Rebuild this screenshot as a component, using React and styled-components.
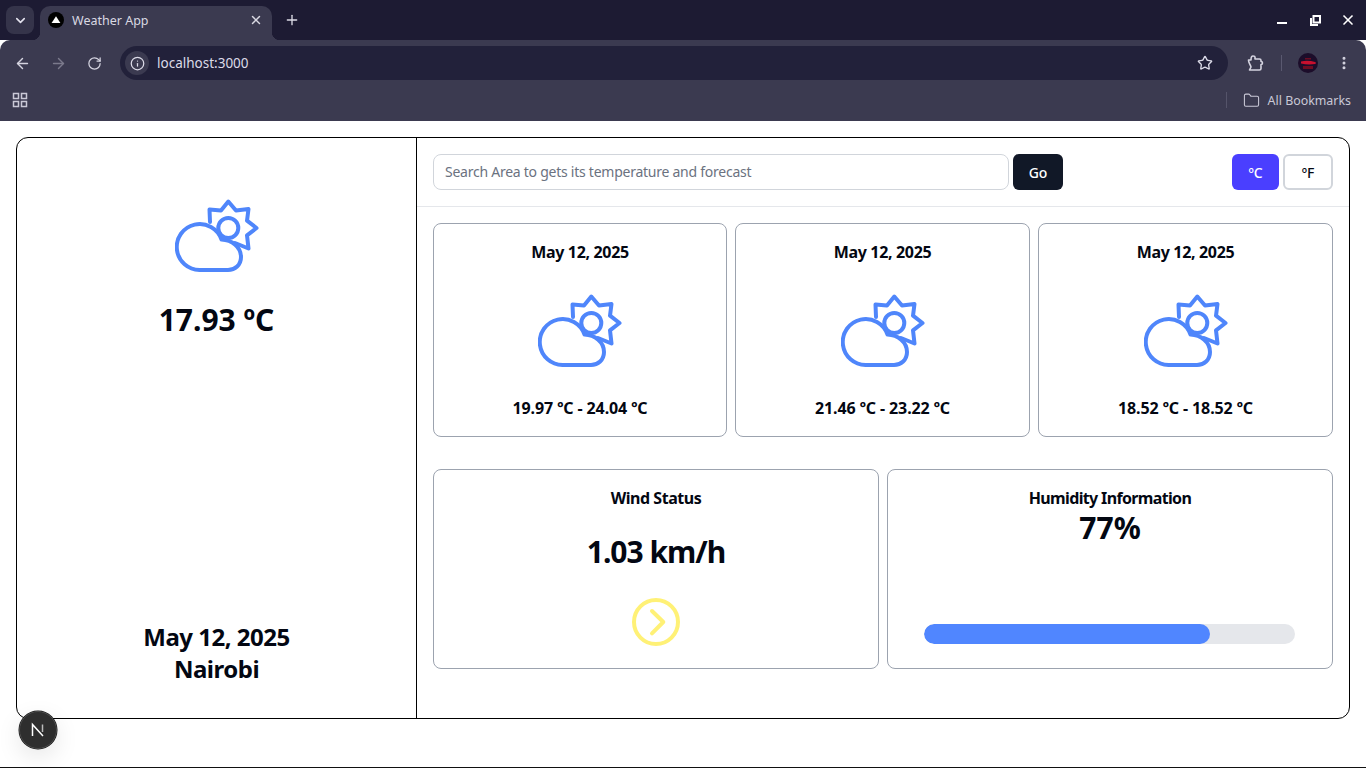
import React from "react";
import styled, { createGlobalStyle } from "styled-components";
import { ArrowLeft, ArrowRight, RotateCw, Info, Star, EllipsisVertical, ChevronDown, X, Plus, Folder } from "lucide-react";

const FONT = `"Noto Sans", "Open Sans", sans-serif`;

const Global = createGlobalStyle`
  * { box-sizing: border-box; }
  html, body { margin: 0; padding: 0; background: #fff; height: 768px; overflow: hidden; }
  body { font-family: ${FONT}; color: #030712; }
`;

const Frame = styled.div`
  width: 1366px;
  height: 768px;
  display: flex;
  flex-direction: column;
  position: relative;
  border-bottom: 1px solid #111;
`;

/* browser chrome */
const TabStrip = styled.div`
  height: 40px;
  background: #1d1b33;
  display: flex;
  align-items: flex-end;
  padding-left: 6px;
`;
const TabSwitch = styled.div`
  width: 28px;
  height: 28px;
  margin-bottom: 6px;
  margin-right: 6px;
  border-radius: 8px;
  background: #35344a;
  color: #e4e3ee;
  display: flex;
  align-items: center;
  justify-content: center;
`;
const Tab = styled.div`
  position: relative;
  width: 232px;
  height: 34px;
  background: #3b3a50;
  border-radius: 10px 10px 0 0;
  display: flex;
  align-items: center;
  padding: 0 9px 6px 8px;
  color: #d9d8e2;
  font-size: 12.5px;

  &::before, &::after {
    content: "";
    position: absolute;
    bottom: 0;
    width: 8px;
    height: 8px;
  }
  &::before { left: -8px; background: radial-gradient(circle at 0 0, transparent 8px, #3b3a50 8.5px); }
  &::after { right: -8px; background: radial-gradient(circle at 100% 0, transparent 8px, #3b3a50 8.5px); }
`;
const TabTitle = styled.span`
  flex: 1;
  margin-left: 8px;
`;
const NewTab = styled.div`
  margin: 0 0 12px 12px;
  color: #dcdbe6;
  display: flex;
`;
const WindowButtons = styled.div`
  margin-left: auto;
  height: 40px;
  display: flex;
  align-items: center;
  gap: 15px;
  padding-right: 9px;
  color: #fff;
`;
const WindowButton = styled.div`
  width: 18px;
  height: 18px;
  display: flex;
  align-items: center;
  justify-content: center;
`;
const Toolbar = styled.div`
  height: 46px;
  background: #3b3a50;
  border-radius: 10px 10px 0 0;
  display: flex;
  align-items: center;
  padding: 0 12px 0 13px;
  color: #d5d4e0;
`;
const NavIcon = styled.div`
  width: 18px;
  display: flex;
  justify-content: center;
  margin-right: 18px;
  color: ${p => (p.$dim ? "#7b7a8c" : "#d5d4e0")};
  &:nth-child(3) { margin-right: 17px; }
`;
const Omnibox = styled.div`
  width: 1108px;
  height: 34px;
  border-radius: 17px;
  background: #22213a;
  display: flex;
  align-items: center;
  padding: 0 15px 0 5px;
  color: #dcdbe8;
  font-size: 13.5px;
`;
const SiteInfo = styled.div`
  width: 24px;
  height: 24px;
  border-radius: 50%;
  background: #3b3a50;
  display: flex;
  align-items: center;
  justify-content: center;
  margin-right: 8px;
`;
const Url = styled.span`
  flex: 1;
`;
const ToolbarRight = styled.div`
  display: flex;
  align-items: center;
  margin-left: 18px;
`;
const ToolSep = styled.div`
  width: 1px;
  height: 16px;
  background: #5a5970;
  margin: 0 16px 0 17px;
`;
const Avatar = styled.div`
  width: 20px;
  height: 20px;
  margin-right: 18px;
  display: flex;
`;
const BookmarkBar = styled.div`
  height: 35px;
  background: #3b3a50;
  display: flex;
  align-items: center;
  padding: 0 15px 7px 12px;
  color: #c9c8d6;
  font-size: 12.4px;
`;
const BookmarkSep = styled.div`
  width: 1px;
  height: 16px;
  background: #55546a;
  margin-left: auto;
  margin-right: 16px;
`;
const BookmarkLabel = styled.span`
  margin-left: 8px;
`;

/* page */
const Page = styled.main`
  flex: 1;
  padding: 16px;
  background: #fff;
`;
const Shell = styled.div`
  height: 582px;
  border: 1px solid #000;
  border-radius: 12px;
  display: flex;
  overflow: hidden;
`;
const Side = styled.aside`
  width: 400px;
  border-right: 1px solid #000;
  padding: 61px 0 33px;
  display: flex;
  flex-direction: column;
  align-items: center;
`;
const SideTemp = styled.div`
  margin-top: 30px;
  font-size: 30px;
  line-height: 36px;
  font-weight: 700;
`;
const SideFoot = styled.div`
  margin-top: auto;
  font-size: 24px;
  line-height: 32px;
  font-weight: 700;
  letter-spacing: -0.5px;
  text-align: center;
`;
const Content = styled.section`
  flex: 1;
  display: flex;
  flex-direction: column;
`;
const SearchBar = styled.div`
  height: 69px;
  padding: 16px;
  border-bottom: 1px solid #e5e7eb;
  display: flex;
  gap: 4px;
`;
const SearchInput = styled.input`
  width: 576px;
  height: 36px;
  border: 1px solid #d1d5db;
  border-radius: 8px;
  padding: 0 11px 2px;
  font-family: ${FONT};
  font-size: 14px;
  letter-spacing: -0.25px;
  outline: none;
  &::placeholder { color: #6b7280; opacity: 1; }
`;
const GoButton = styled.button`
  width: 50px;
  height: 36px;
  border: 0;
  border-radius: 6px;
  background: #111827;
  color: #fff;
  font-family: ${FONT};
  font-size: 14px;
  font-weight: 500;
`;
const Units = styled.div`
  margin-left: auto;
  display: flex;
  gap: 4px;
`;
const UnitButton = styled.button`
  width: ${p => (p.$active ? 47 : 50)}px;
  height: 36px;
  border-radius: 6px;
  border: ${p => (p.$active ? "0" : "2px solid #d1d5db")};
  background: ${p => (p.$active ? "#4a3fff" : "#fff")};
  color: ${p => (p.$active ? "#fff" : "#030712")};
  font-family: ${FONT};
  font-size: 14px;
  font-weight: 500;
`;
const Body = styled.div`
  padding: 16px;
  display: flex;
  flex-direction: column;
  gap: 32px;
`;
const ForecastRow = styled.div`
  display: grid;
  grid-template-columns: 294px 295px 295px;
  gap: 8px;
`;
const Card = styled.div`
  border: 1px solid #9ca3af;
  border-radius: 8px;
  display: flex;
  flex-direction: column;
  align-items: center;
`;
const ForecastCard = styled(Card)`
  height: 214px;
  padding: 16px;
  justify-content: space-between;
`;
const CardLabel = styled.div`
  font-size: 16px;
  line-height: 24px;
  font-weight: 700;
  letter-spacing: ${p => p.$spacing || "-0.33px"};
`;
const StatRow = styled.div`
  display: grid;
  grid-template-columns: 1fr 1fr;
  gap: 8px;
`;
const StatCard = styled(Card)`
  height: 200px;
  padding: 16px 36px 0;
`;
const WindValue = styled.div`
  margin: 24px 0 27px;
  font-size: 30px;
  line-height: 36px;
  font-weight: 700;
  letter-spacing: -1px;
`;
const HumidityValue = styled.div`
  font-size: 30px;
  line-height: 36px;
  font-weight: 700;
`;
const Track = styled.div`
  margin: auto 0 24px;
  align-self: flex-start;
  width: 371px;
  height: 20px;
  border-radius: 10px;
  background: #e5e7eb;
  overflow: hidden;
`;
const Fill = styled.div`
  height: 100%;
  border-radius: 10px;
  background: #5086ff;
`;
const DevBadge = styled.div`
  position: absolute;
  left: 19px;
  top: 711px;
  width: 38px;
  height: 38px;
  border-radius: 50%;
  background: #2e2e2e;
  border: 1px solid #4d4d4d;
  box-shadow: 0 0 0 0.5px #111, 0 8px 24px rgba(0, 0, 0, 0.1);
  display: flex;
  align-items: center;
  justify-content: center;
`;
const ArrowSvg = styled.svg`
  flex: none;
`;

const CloudSunIcon = () => (
  <svg width="84" height="73" viewBox="15 9 84 73" fill="none" stroke="#4f86fb" strokeWidth="4" strokeLinecap="round" strokeLinejoin="round">
    <path d="M50 32 L49.5 19.5 L61 20.5 L68.3 11.5 L76 20.5 L88.5 19 L87 30.7 L96.5 38 L87 45.3 L88.5 58.5 L75 53" />
    <path d="M40 80 A23 23 0 1 1 61.5 49.5 C72 50 81 57 81 67 C81 75 75 80 68 80 Z" fill="#fff" />
    <circle cx="68.3" cy="38" r="10" />
  </svg>
);

const ExtensionIcon = () => (
  <svg width="18" height="18" viewBox="0 0 18 18" fill="none" stroke="currentColor" strokeWidth="1.6" strokeLinejoin="round">
    <path d="M2.5 6 L5 6 C5 2.5 6 2 7 2 L7 2 C8 2 9 2.5 9 3 L9 5 L13.5 5 C14.5 5 15 5.5 15 6.5 L15 7.5 C17 7.5 17 10.5 15 10.5 L15 14.5 C15 15.5 14.5 16 13.5 16 L3.5 16 L5 13 C4 10 2.5 9 2.5 6 Z" />
  </svg>
);

const MinimizeIcon = () => (
  <svg width="12" height="12" viewBox="0 0 12 12">
    <path d="M1 8 H11 V10 H1 Z" fill="#fff" />
  </svg>
);

const RestoreIcon = () => (
  <svg width="11" height="11" viewBox="0 0 11 11" fill="none" stroke="#fff" strokeWidth="2">
    <path d="M3.5 1 H10 V7.5 H3.5 Z M1 3 V10 H8" />
  </svg>
);

const AppGrid = () => (
  <svg width="16" height="16" viewBox="0 0 16 16" fill="none" stroke="#c9c8d6" strokeWidth="1.5">
    <rect x="1.5" y="1.5" width="5" height="5" />
    <rect x="9.5" y="1.5" width="5" height="5" />
    <rect x="1.5" y="9.5" width="5" height="5" />
    <rect x="9.5" y="9.5" width="5" height="5" />
  </svg>
);

const Favicon = () => (
  <svg width="16" height="16" viewBox="0 0 16 16">
    <circle cx="8" cy="8" r="8" fill="#000" />
    <path d="M8 4.2 L12.4 11 H3.6 Z" fill="#fff" />
  </svg>
);

const ProfilePic = () => (
  <svg width="20" height="20" viewBox="0 0 20 20">
    <circle cx="10" cy="10" r="10" fill="#1c0d2a" />
    <path d="M3 8.5 Q10 7 17 9 Q19 10 17 11 Q10 12 3 10.5 Z" fill="#c8102e" />
    <path d="M7 5 H13 V6.5 H7 Z M5 13 H15 V16 H5 Z" fill="#6e0c22" />
  </svg>
);

const NextLogo = () => (
  <svg width="16" height="16" viewBox="0 0 16 16" fill="none">
    <path d="M2.5 14 V2.5 L13 14" stroke="#fff" strokeWidth="1.5" />
    <path d="M12.5 2.5 V10" stroke="#bbb" strokeWidth="1.5" />
  </svg>
);

const WindArrow = () => (
  <ArrowSvg width="50" height="50" viewBox="0 0 50 50" fill="none" stroke="#fff176" strokeWidth="4" strokeLinecap="round" strokeLinejoin="round">
    <circle cx="25" cy="25" r="22" />
    <path d="M21 14 L32.3 25 L21 36.3" />
  </ArrowSvg>
);

const forecast = [
  { date: "May 12, 2025", range: "19.97 ºC - 24.04 ºC" },
  { date: "May 12, 2025", range: "21.46 ºC - 23.22 ºC" },
  { date: "May 12, 2025", range: "18.52 ºC - 18.52 ºC" },
];

function App() {
  const humidity = 77;
  return (
    <Frame>
      <Global />
      <TabStrip>
        <TabSwitch><ChevronDown size={15} strokeWidth={2.5} /></TabSwitch>
        <Tab>
          <Favicon />
          <TabTitle>Weather App</TabTitle>
          <X size={14} strokeWidth={2.5} />
        </Tab>
        <NewTab><Plus size={16} strokeWidth={2} /></NewTab>
        <WindowButtons>
          <WindowButton><MinimizeIcon /></WindowButton>
          <WindowButton><RestoreIcon /></WindowButton>
          <WindowButton><X size={16} strokeWidth={2.5} /></WindowButton>
        </WindowButtons>
      </TabStrip>
      <Toolbar>
        <NavIcon><ArrowLeft size={17} /></NavIcon>
        <NavIcon $dim><ArrowRight size={17} /></NavIcon>
        <NavIcon><RotateCw size={15} /></NavIcon>
        <Omnibox>
          <SiteInfo><Info size={15} /></SiteInfo>
          <Url>localhost:3000</Url>
          <Star size={16} />
        </Omnibox>
        <ToolbarRight>
          <ExtensionIcon />
          <ToolSep />
          <Avatar><ProfilePic /></Avatar>
          <EllipsisVertical size={16} strokeWidth={2.5} />
        </ToolbarRight>
      </Toolbar>
      <BookmarkBar>
        <AppGrid />
        <BookmarkSep />
        <Folder size={17} strokeWidth={1.5} />
        <BookmarkLabel>All Bookmarks</BookmarkLabel>
      </BookmarkBar>
      <Page>
        <Shell>
          <Side>
            <CloudSunIcon />
            <SideTemp>17.93 ºC</SideTemp>
            <SideFoot>
              <div>May 12, 2025</div>
              <div>Nairobi</div>
            </SideFoot>
          </Side>
          <Content>
            <SearchBar>
              <SearchInput placeholder="Search Area to gets its temperature and forecast" />
              <GoButton>Go</GoButton>
              <Units>
                <UnitButton $active>ºC</UnitButton>
                <UnitButton>ºF</UnitButton>
              </Units>
            </SearchBar>
            <Body>
              <ForecastRow>
                {forecast.map((day, i) => (
                  <ForecastCard key={i}>
                    <CardLabel>{day.date}</CardLabel>
                    <CloudSunIcon />
                    <CardLabel $spacing="-0.1px">{day.range}</CardLabel>
                  </ForecastCard>
                ))}
              </ForecastRow>
              <StatRow>
                <StatCard>
                  <CardLabel $spacing="-0.45px">Wind Status</CardLabel>
                  <WindValue>1.03 km/h</WindValue>
                  <WindArrow />
                </StatCard>
                <StatCard>
                  <CardLabel $spacing="-0.65px">Humidity Information</CardLabel>
                  <HumidityValue>{humidity}%</HumidityValue>
                  <Track>
                    <Fill style={{ width: `${humidity}%` }} />
                  </Track>
                </StatCard>
              </StatRow>
            </Body>
          </Content>
        </Shell>
      </Page>
      <DevBadge><NextLogo /></DevBadge>
    </Frame>
  );
}

export default App;
